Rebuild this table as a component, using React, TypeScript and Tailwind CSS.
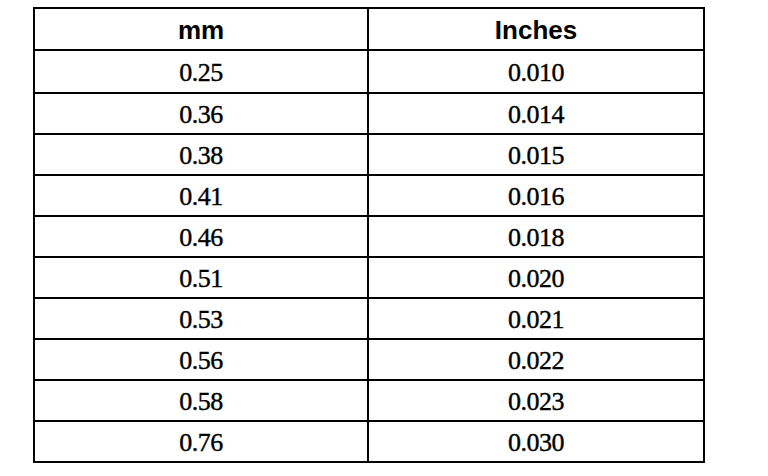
const rows: [string, string][] = [
  ["0.25", "0.010"],
  ["0.36", "0.014"],
  ["0.38", "0.015"],
  ["0.41", "0.016"],
  ["0.46", "0.018"],
  ["0.51", "0.020"],
  ["0.53", "0.021"],
  ["0.56", "0.022"],
  ["0.58", "0.023"],
  ["0.76", "0.030"],
];

const App = () => {
  return (
    <div className="w-[768px] h-[476px] bg-white overflow-hidden pt-[7px]">
      <div className="ml-[33px] w-[672px] border-2 border-black text-black">
        <div className="flex h-[42px] border-b-2 border-black font-['Liberation_Sans',Arial,sans-serif] font-bold text-[26px]">
          <div className="w-[334px] border-r-2 border-black flex items-center justify-center pt-[3px]">mm</div>
          <div className="flex-1 flex items-center justify-center pt-[3px]">Inches</div>
        </div>
        {rows.map(([mm, inch], i) => (
          <div
            key={mm}
            className={
              "flex font-['Liberation_Serif','Times_New_Roman',serif] text-[26px] [-webkit-text-stroke:0.4px_black] " +
              (i === 0 ? "h-[43px] border-b-2 border-black" : i === rows.length - 1 ? "h-[39px]" : "h-[41px] border-b-2 border-black")
            }
          >
            <div className="w-[334px] border-r-2 border-black flex items-center justify-center pt-[2px] tracking-[-0.5px]">{mm}</div>
            <div className="flex-1 flex items-center justify-center pt-[2px] tracking-[-0.5px]">{inch}</div>
          </div>
        ))}
      </div>
    </div>
  );
};

export default App;
